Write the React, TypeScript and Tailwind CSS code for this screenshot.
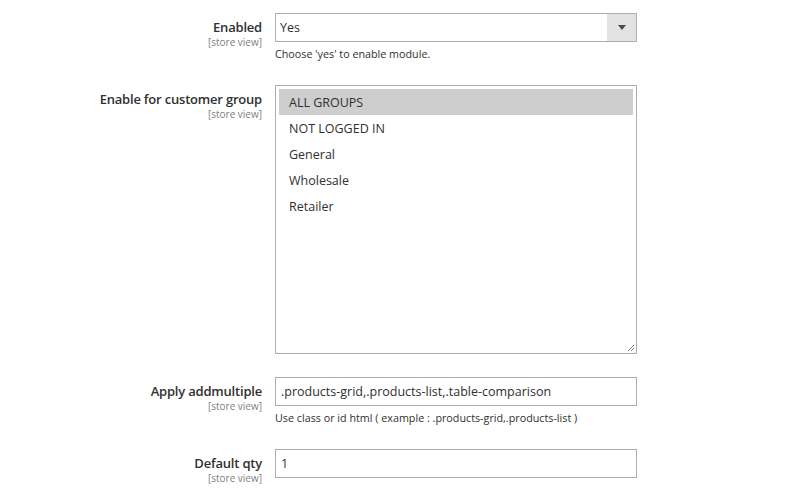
import React from "react";

const font = { fontFamily: '"Open Sans", "Noto Sans", sans-serif' };

function Label({ text }: { text: string }) {
  return (
    <div className="w-[262px] shrink-0 text-right pt-[6px]">
      <div className="text-[13px] leading-[17px] font-semibold tracking-[-0.2px] text-[#303030]">{text}</div>
      <div className="text-[10px] leading-[12px] text-[#808080]">[store view]</div>
    </div>
  );
}

export default function App() {
  const groups = ["ALL GROUPS", "NOT LOGGED IN", "General", "Wholesale", "Retailer"];
  return (
    <div className="w-[792px] h-[492px] bg-white overflow-hidden pt-[13px]" style={font}>
      {/* Enabled */}
      <div className="flex">
        <Label text="Enabled" />
        <div className="ml-[13px] w-[362px]">
          <div className="flex h-[29px] border border-[#adadad] bg-white">
            <div className="flex-1 flex items-center pl-[4px] pt-[1px] text-[12.5px] text-[#303030]">Yes</div>
            <div className="w-[29px] bg-[#e3e3e3] flex items-center justify-center">
              <svg width="8" height="5" viewBox="0 0 8 5">
                <path d="M0 0 L8 0 L4 5 Z" fill="#514943" />
              </svg>
            </div>
          </div>
          <div className="mt-[4px] text-[10.75px] leading-[16px] text-[#303030]">Choose 'yes' to enable module.</div>
        </div>
      </div>

      {/* Customer group */}
      <div className="flex mt-[23px]">
        <Label text="Enable for customer group" />
        <div className="ml-[13px] w-[362px]">
          <div className="relative h-[269px] border border-[#adadad] bg-white p-[3px]">
            {groups.map((g, i) => (
              <div
                key={g}
                className={
                  "h-[26px] flex items-center pl-[10px] pt-[2px] text-[12.5px] text-[#303030] " +
                  (i === 0 ? "bg-[#cecece]" : "")
                }
              >
                {g}
              </div>
            ))}
            <svg className="absolute right-[1px] bottom-[1px]" width="8" height="8" viewBox="0 0 8 8">
              <path d="M1 7 L7 1 M4 7 L7 4" stroke="#777" strokeWidth="1" />
            </svg>
          </div>
        </div>
      </div>

      {/* Apply addmultiple */}
      <div className="flex mt-[23px]">
        <Label text="Apply addmultiple" />
        <div className="ml-[13px] w-[362px]">
          <div className="h-[29px] border border-[#adadad] bg-white flex items-center pl-[5px] pt-[1px] text-[12.5px] text-[#303030]">
            .products-grid,.products-list,.table-comparison
          </div>
          <div className="mt-[4px] text-[10.75px] leading-[16px] text-[#303030]">
            Use class or id html ( example : .products-grid,.products-list )
          </div>
        </div>
      </div>

      {/* Default qty */}
      <div className="flex mt-[23px]">
        <Label text="Default qty" />
        <div className="ml-[13px] w-[362px]">
          <div className="h-[29px] border border-[#adadad] bg-white flex items-center pl-[5px] pt-[1px] text-[12.5px] text-[#303030]">
            1
          </div>
        </div>
      </div>
    </div>
  );
}
